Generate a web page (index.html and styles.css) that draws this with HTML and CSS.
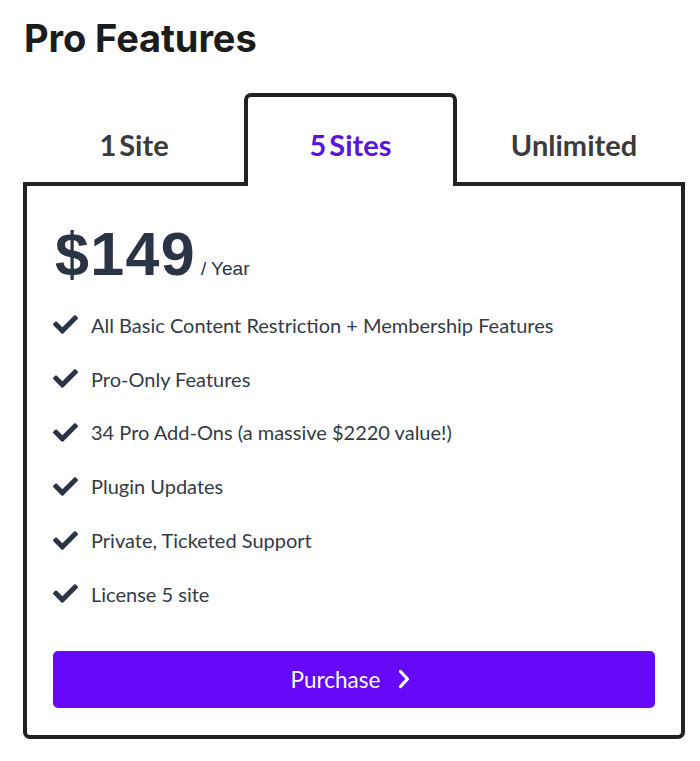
FILE: index.html
```html
<!DOCTYPE html>
<html>
<head>
<meta charset="utf-8">
<link rel="stylesheet" href="styles.css">
</head>
<body>
<div class="page">
  <h1 class="title">Pro Features</h1>
  <div class="pricing">
    <div class="tabs">
      <div class="tab tab-first">1 Site</div>
      <div class="tab tab-active">5 Sites</div>
      <div class="tab tab-last">Unlimited</div>
    </div>
    <div class="card">
      <div class="price"><span class="amount">$149</span><span class="period">/ Year</span></div>
      <ul class="features">
        <li><svg class="check" viewBox="0 0 512 512"><path d="M173.898 439.404l-166.4-166.4c-9.997-9.997-9.997-26.206 0-36.204l36.203-36.204c9.997-9.998 26.207-9.998 36.204 0L192 312.69 432.095 72.596c9.997-9.997 26.207-9.997 36.204 0l36.203 36.204c9.997 9.997 9.997 26.206 0 36.204l-294.4 294.401c-9.998 9.997-26.207 9.997-36.204-.001z"/></svg><span>All Basic Content Restriction + Membership Features</span></li>
        <li><svg class="check" viewBox="0 0 512 512"><path d="M173.898 439.404l-166.4-166.4c-9.997-9.997-9.997-26.206 0-36.204l36.203-36.204c9.997-9.998 26.207-9.998 36.204 0L192 312.69 432.095 72.596c9.997-9.997 26.207-9.997 36.204 0l36.203 36.204c9.997 9.997 9.997 26.206 0 36.204l-294.4 294.401c-9.998 9.997-26.207 9.997-36.204-.001z"/></svg><span>Pro-Only Features</span></li>
        <li><svg class="check" viewBox="0 0 512 512"><path d="M173.898 439.404l-166.4-166.4c-9.997-9.997-9.997-26.206 0-36.204l36.203-36.204c9.997-9.998 26.207-9.998 36.204 0L192 312.69 432.095 72.596c9.997-9.997 26.207-9.997 36.204 0l36.203 36.204c9.997 9.997 9.997 26.206 0 36.204l-294.4 294.401c-9.998 9.997-26.207 9.997-36.204-.001z"/></svg><span>34 Pro Add-Ons (a massive $2220 value!)</span></li>
        <li><svg class="check" viewBox="0 0 512 512"><path d="M173.898 439.404l-166.4-166.4c-9.997-9.997-9.997-26.206 0-36.204l36.203-36.204c9.997-9.998 26.207-9.998 36.204 0L192 312.69 432.095 72.596c9.997-9.997 26.207-9.997 36.204 0l36.203 36.204c9.997 9.997 9.997 26.206 0 36.204l-294.4 294.401c-9.998 9.997-26.207 9.997-36.204-.001z"/></svg><span>Plugin Updates</span></li>
        <li><svg class="check" viewBox="0 0 512 512"><path d="M173.898 439.404l-166.4-166.4c-9.997-9.997-9.997-26.206 0-36.204l36.203-36.204c9.997-9.998 26.207-9.998 36.204 0L192 312.69 432.095 72.596c9.997-9.997 26.207-9.997 36.204 0l36.203 36.204c9.997 9.997 9.997 26.206 0 36.204l-294.4 294.401c-9.998 9.997-26.207 9.997-36.204-.001z"/></svg><span>Private, Ticketed Support</span></li>
        <li><svg class="check" viewBox="0 0 512 512"><path d="M173.898 439.404l-166.4-166.4c-9.997-9.997-9.997-26.206 0-36.204l36.203-36.204c9.997-9.998 26.207-9.998 36.204 0L192 312.69 432.095 72.596c9.997-9.997 26.207-9.997 36.204 0l36.203 36.204c9.997 9.997 9.997 26.206 0 36.204l-294.4 294.401c-9.998 9.997-26.207 9.997-36.204-.001z"/></svg><span>License 5 site</span></li>
      </ul>
      <button class="purchase"><span>Purchase</span><svg class="chev" viewBox="0 0 12 20"><path d="M2.5 2.5 L9.5 10 L2.5 17.5"/></svg></button>
    </div>
  </div>
</div>
</body>
</html>
```
FILE: styles.css
```css
* { box-sizing: border-box; }
html, body { margin: 0; padding: 0; background: #ffffff; }
.page { padding: 14px 15px 0 23px; }
.title {
  margin: 0 0 0 1px;
  font-family: Inter, "Liberation Sans", sans-serif;
  font-weight: 700;
  font-size: 38px;
  line-height: 48px;
  color: #1c1c1c;
  letter-spacing: -0.1px;
}
.pricing { margin-top: 31px; width: 662px; }
.tabs {
  display: grid;
  grid-template-columns: 221px 213px 1fr;
  height: 93px;
}
.tab {
  display: flex;
  align-items: center;
  justify-content: center;
  font-family: Lato, "Liberation Sans", sans-serif;
  font-weight: 700;
  font-size: 29px;
  word-spacing: -4px;
  color: #3b3b3b;
  padding-top: 14px;
  border-bottom: 4px solid #222222;
}
.tab-first { padding-left: 1px; }
.tab-last { padding-left: 6px; }
.tab-active {
  border: 4px solid #222222;
  border-bottom: none;
  border-radius: 7px 7px 0 0;
  color: #5a14dc;
  padding-top: 6px;
}
.card {
  border: 4px solid #222222;
  border-top: none;
  border-radius: 0 0 7px 7px;
  padding: 32px 26px 27px 26px;
  font-family: Lato, "Liberation Sans", sans-serif;
}
.price { display: flex; align-items: baseline; color: #2b3445; }
.amount {
  font-family: "Liberation Sans", Arial, sans-serif;
  font-weight: 700;
  font-size: 61px;
  line-height: 72px;
  letter-spacing: 1.3px;
  margin-left: 2px;
}
.period {
  font-family: "Liberation Sans", Arial, sans-serif;
  font-size: 19px;
  margin-left: 5px;
}
.features { list-style: none; margin: 8px 0 0 0; padding: 0; }
.features li {
  display: flex;
  align-items: center;
  height: 53.8px;
  font-size: 20px;
  color: #333a47;
}
.check { width: 25px; height: 25px; fill: #2b3445; margin-right: 13px; flex: none; }
.purchase {
  margin-top: 30px;
  width: 100%;
  height: 57px;
  border: none;
  border-radius: 5px;
  background: #6509f6;
  color: #ffffff;
  font-family: Lato, "Liberation Sans", sans-serif;
  font-size: 22.5px;
  display: flex;
  align-items: center;
  justify-content: center;
  gap: 18px;
  padding: 0 7px 0 0;
}
.chev { width: 12px; height: 20px; fill: none; stroke: #ffffff; stroke-width: 3.2; stroke-linecap: round; stroke-linejoin: round; }
```
